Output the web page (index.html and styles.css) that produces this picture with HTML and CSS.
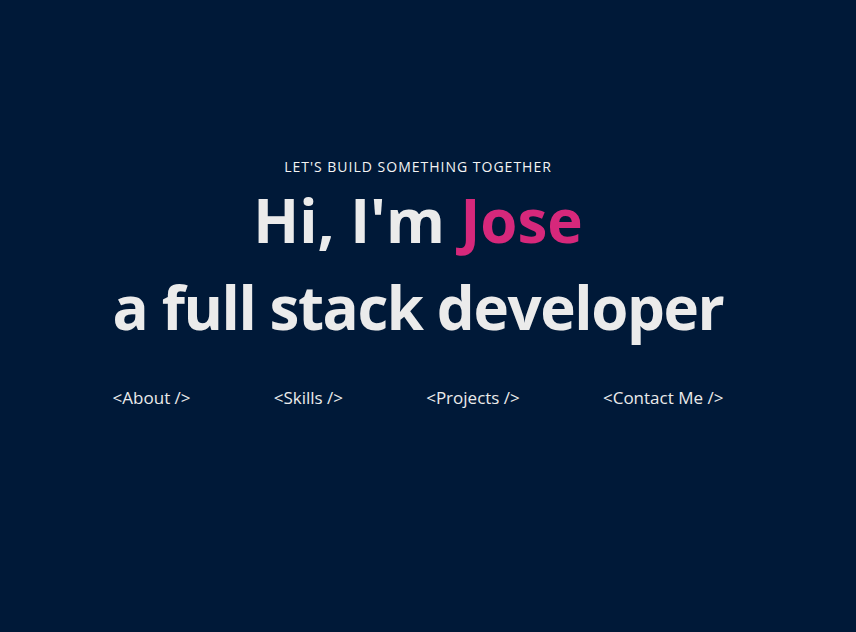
FILE: index.html
```html
<!DOCTYPE html>
<html>
<head>
<meta charset="utf-8">
<link rel="stylesheet" href="styles.css">
</head>
<body>
<main class="hero">
  <div class="hero-inner">
    <p class="tagline">LET'S BUILD SOMETHING TOGETHER</p>
    <h1 class="title">Hi, I'm <span class="accent">Jose</span></h1>
    <h1 class="title title-second">a full stack developer</h1>
    <nav class="nav">
      <a class="nav-link" href="#">&lt;About /&gt;</a>
      <a class="nav-link" href="#">&lt;Skills /&gt;</a>
      <a class="nav-link" href="#">&lt;Projects /&gt;</a>
      <a class="nav-link" href="#">&lt;Contact Me /&gt;</a>
    </nav>
  </div>
</main>
</body>
</html>
```

FILE: styles.css
```css
html, body {
  margin: 0;
  padding: 0;
  background: #001938;
  height: 100%;
}
body {
  font-family: "Open Sans", "Noto Sans", sans-serif;
  color: #ebebeb;
}
.hero {
  display: flex;
  justify-content: center;
  padding-top: 157px;
  padding-right: 20px;
}
.hero-inner {
  display: flex;
  flex-direction: column;
  align-items: center;
}
.tagline {
  margin: 0;
  font-size: 14px;
  letter-spacing: 1px;
  line-height: 20px;
  color: #f4f4f4;
}
.title {
  margin: 0;
  font-size: 60px;
  font-weight: 700;
  line-height: 87px;
}
.title-second {
  letter-spacing: -1.4px;
}
.accent {
  color: #d6287b;
}
.nav {
  align-self: stretch;
  display: flex;
  justify-content: space-between;
  margin-top: 35px;
}
.nav-link {
  color: #ebebeb;
  text-decoration: none;
  font-size: 17px;
}
```
